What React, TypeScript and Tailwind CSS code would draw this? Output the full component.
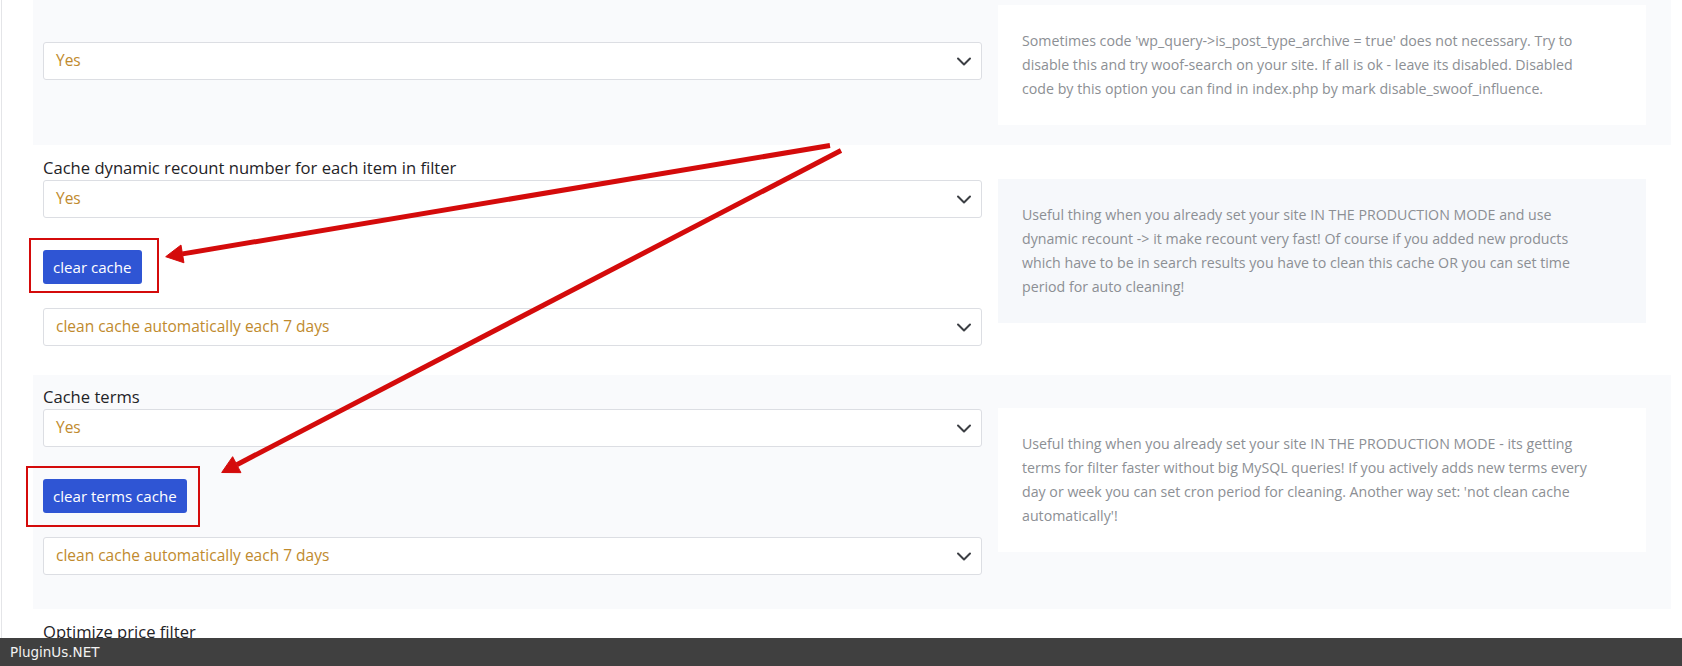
import React from 'react';

// Nunito is not installed here, Open Sans is the closest width
const FONT = { fontFamily: '"Open Sans", "Noto Sans", sans-serif' };

type Pt = [number, number];

// red annotation arrows drawn over the page
const arrows: { from: Pt; tip: Pt }[] = [
  { from: [830, 145.5], tip: [165.7, 256.7] },
  { from: [841, 150.5], tip: [221.7, 472.5] },
];

const arrowHead = (from: Pt, tip: Pt, len = 17, half = 9) => {
  const dx = tip[0] - from[0];
  const dy = tip[1] - from[1];
  const d = Math.hypot(dx, dy);
  const ux = dx / d;
  const uy = dy / d;
  const bx = tip[0] - ux * len;
  const by = tip[1] - uy * len;
  return {
    base: [bx, by] as Pt,
    points: `${tip[0]},${tip[1]} ${bx - uy * half},${by + ux * half} ${bx + uy * half},${by - ux * half}`,
  };
};

const SelectBox = ({ value }: { value: string }) => (
  <div className="relative h-[38px] w-full bg-white border border-[#dcdee3] rounded-[3px] flex items-center pl-[12px]">
    <span className="text-[15.5px] text-[#c08a2d]">{value}</span>
    <svg className="absolute right-[9px] top-1/2 -translate-y-1/2" width="16" height="12" viewBox="0 0 16 12">
      <path d="M2 3.5l6 6 6-6" fill="none" stroke="#3c3f44" strokeWidth="2" strokeLinecap="round" strokeLinejoin="round" />
    </svg>
  </div>
);

const ActionButton = ({ label, frame }: { label: string; frame: string }) => (
  <div className="relative self-start mt-[32px] mb-[24px]">
    <button className="h-[34px] px-[10px] rounded-[3px] bg-[#2f55d4] text-white text-[15.1px] leading-6">
      {label}
    </button>
    {/* red frame from the screenshot annotation */}
    <div className={`absolute border-2 border-[#d40b0b] pointer-events-none ${frame}`} />
  </div>
);

const Label = ({ children }: { children: React.ReactNode }) => (
  <div className="text-[16.6px] leading-6 text-[#1f2327]">{children}</div>
);

const Desc = ({ lines, bg }: { lines: string[]; bg: string }) => (
  <div className={`w-[648px] shrink-0 px-6 py-6 text-[14.2px] leading-6 text-[#8c8f94] ${bg}`}>
    {lines.map((line) => (
      <div key={line} className="whitespace-nowrap">
        {line}
      </div>
    ))}
  </div>
);

export default function App() {
  return (
    <div className="relative w-full h-[666px] overflow-hidden bg-white pl-px" style={FONT}>
      <div className="border-l border-[#e4e5e8] min-h-full">
        {/* section 1 – scrolled, label above the view */}
        <div className="ml-[31px] w-[1638px] h-[145px] bg-[#f9fafc] flex gap-4">
          <div className="w-[949px] pl-[10px] pt-[42px]">
            <SelectBox value="Yes" />
          </div>
          <div className="pt-[5px]">
            <Desc
              bg="bg-white"
              lines={[
                "Sometimes code 'wp_query->is_post_type_archive = true' does not necessary. Try to",
                'disable this and try woof-search on your site. If all is ok - leave its disabled. Disabled',
                'code by this option you can find in index.php by mark disable_swoof_influence.',
              ]}
            />
          </div>
        </div>

        {/* section 2 */}
        <div className="ml-[31px] w-[1638px] pt-[11px] pb-[29px] flex items-center gap-4">
          <div className="w-[949px] pl-[10px] flex flex-col">
            <Label>Cache dynamic recount number for each item in filter</Label>
            <SelectBox value="Yes" />
            <ActionButton label="clear cache" frame="-left-[14px] -top-[12px] -right-[17px] -bottom-[9px]" />
            <SelectBox value="clean cache automatically each 7 days" />
          </div>
          <Desc
            bg="bg-[#f6f8fb]"
            lines={[
              'Useful thing when you already set your site IN THE PRODUCTION MODE and use',
              'dynamic recount -> it make recount very fast! Of course if you added new products',
              'which have to be in search results you have to clean this cache OR you can set time',
              'period for auto cleaning!',
            ]}
          />
        </div>

        {/* section 3 */}
        <div className="ml-[31px] w-[1638px] bg-[#f9fafc] pt-[10px] pb-[34px] flex items-center gap-4">
          <div className="w-[949px] pl-[10px] flex flex-col">
            <Label>Cache terms</Label>
            <SelectBox value="Yes" />
            <ActionButton label="clear terms cache" frame="-left-[17px] -top-[13px] -right-[13px] -bottom-[14px]" />
            <SelectBox value="clean cache automatically each 7 days" />
          </div>
          <Desc
            bg="bg-white"
            lines={[
              'Useful thing when you already set your site IN THE PRODUCTION MODE - its getting',
              'terms for filter faster without big MySQL queries! If you actively adds new terms every',
              "day or week you can set cron period for cleaning. Another way set: 'not clean cache",
              "automatically'!",
            ]}
          />
        </div>

        {/* section 4 – mostly under the footer */}
        <div className="ml-[31px] w-[1638px] pt-[11px] pl-[10px]">
          <Label>Optimize price filter</Label>
        </div>
      </div>

      <svg className="absolute inset-0 pointer-events-none" width="1682" height="666">
        {arrows.map(({ from, tip }, i) => {
          const head = arrowHead(from, tip);
          return (
            <g key={i} fill="#d40b0b" stroke="#d40b0b">
              <line x1={from[0]} y1={from[1]} x2={head.base[0]} y2={head.base[1]} strokeWidth="5" />
              <polygon points={head.points} strokeWidth="1" strokeLinejoin="miter" />
            </g>
          );
        })}
      </svg>

      <div className="absolute bottom-0 left-0 right-0 h-[28px] bg-[#404040] flex items-center pl-[10px]">
        <span className="text-[13.5px] text-[#f2f2f2]" style={{ fontFamily: '"DejaVu Sans", sans-serif' }}>
          PluginUs.NET
        </span>
      </div>
    </div>
  );
}
